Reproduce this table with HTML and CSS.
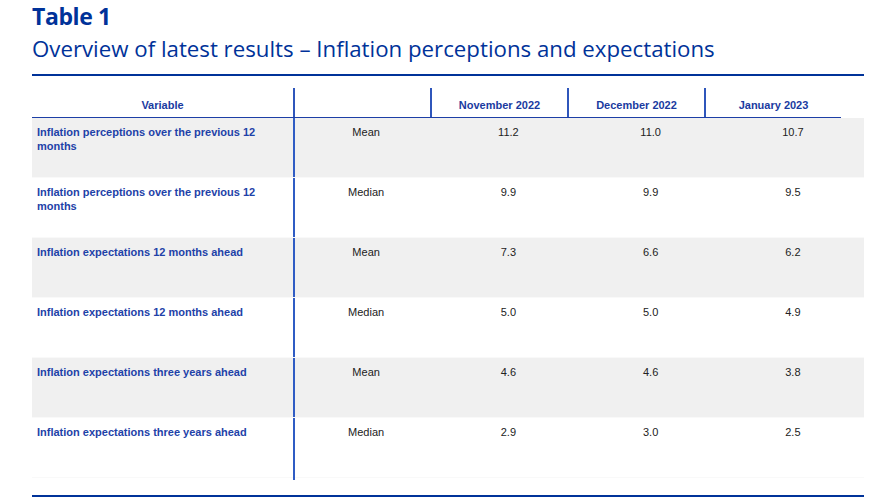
FILE: index.html
```html
<!DOCTYPE html>
<html lang="en">
<head>
<meta charset="utf-8">
<title>Table 1</title>
<link rel="stylesheet" href="styles.css">
</head>
<body>
<div class="page">
  <h1 class="title">Table 1</h1>
  <h2 class="subtitle">Overview of latest results – Inflation perceptions and expectations</h2>
  <div class="rule"></div>
  <div class="table">
    <div class="head">
      <div class="hcell">Variable</div>
      <div class="hcell sep"></div>
      <div class="hcell sep">November 2022</div>
      <div class="hcell sep">December 2022</div>
      <div class="hcell sep">January 2023</div>
    </div>
    <div class="body">
      <div class="row shaded">
        <div class="label">Inflation perceptions over the previous 12 months</div>
        <div class="cell">Mean</div>
        <div class="cell">11.2</div>
        <div class="cell">11.0</div>
        <div class="cell">10.7</div>
      </div>
      <div class="row">
        <div class="label">Inflation perceptions over the previous 12 months</div>
        <div class="cell">Median</div>
        <div class="cell">9.9</div>
        <div class="cell">9.9</div>
        <div class="cell">9.5</div>
      </div>
      <div class="row shaded">
        <div class="label">Inflation expectations 12 months ahead</div>
        <div class="cell">Mean</div>
        <div class="cell">7.3</div>
        <div class="cell">6.6</div>
        <div class="cell">6.2</div>
      </div>
      <div class="row">
        <div class="label">Inflation expectations 12 months ahead</div>
        <div class="cell">Median</div>
        <div class="cell">5.0</div>
        <div class="cell">5.0</div>
        <div class="cell">4.9</div>
      </div>
      <div class="row shaded">
        <div class="label">Inflation expectations three years ahead</div>
        <div class="cell">Mean</div>
        <div class="cell">4.6</div>
        <div class="cell">4.6</div>
        <div class="cell">3.8</div>
      </div>
      <div class="row">
        <div class="label">Inflation expectations three years ahead</div>
        <div class="cell">Median</div>
        <div class="cell">2.9</div>
        <div class="cell">3.0</div>
        <div class="cell">2.5</div>
      </div>
    </div>
  </div>
  <div class="rule bottom"></div>
</div>
</body>
</html>
```

FILE: styles.css
```css
html, body {
  margin: 0;
  padding: 0;
  background: #ffffff;
}

.page {
  width: 832px;
  margin-left: 32px;
}

.title {
  margin: 0;
  font-family: "Open Sans", "Noto Sans", sans-serif;
  font-weight: 700;
  font-size: 23px;
  letter-spacing: -0.4px;
  line-height: 33px;
  color: #003299;
}

.subtitle {
  margin: 2px 0 0 0;
  font-family: "Open Sans", "Noto Sans", sans-serif;
  font-weight: 400;
  font-size: 22.25px;
  line-height: 28px;
  color: #003299;
}

.rule {
  height: 2px;
  background: #003299;
  margin-top: 11px;
}

.rule.bottom {
  margin-top: 17px;
}

.table {
  margin-top: 12px;
  font-family: "Liberation Sans", Arial, sans-serif;
  font-size: 11px;
}

.head {
  display: grid;
  grid-template-columns: 261px 137px 137px 137px 137px;
  width: 809px;
  border-bottom: 1px solid #1d3fa6;
}

.hcell {
  box-sizing: border-box;
  height: 29px;
  display: flex;
  align-items: flex-end;
  justify-content: center;
  padding-bottom: 5px;
  line-height: 13px;
  font-weight: 700;
  color: #1a3b9f;
}

.hcell.sep {
  border-left: 2px solid #2f56bb;
}

.body {
  display: flex;
  flex-direction: column;
}

.row {
  display: grid;
  grid-template-columns: 263px repeat(4, 1fr);
  height: 60px;
  box-sizing: border-box;
  border-bottom: 1px solid #f9f9f9;
}

.row.shaded {
  background: #f0f0f0;
}

.label {
  box-sizing: border-box;
  border-right: 2px solid #2f5cc4;
  padding: 7px 18px 0 5px;
  line-height: 14px;
  font-weight: 700;
  color: #1e42a8;
}

.row:last-child .label {
  height: 62px;
}

.cell {
  padding-top: 7px;
  line-height: 14px;
  text-align: center;
  color: #222222;
}
```
